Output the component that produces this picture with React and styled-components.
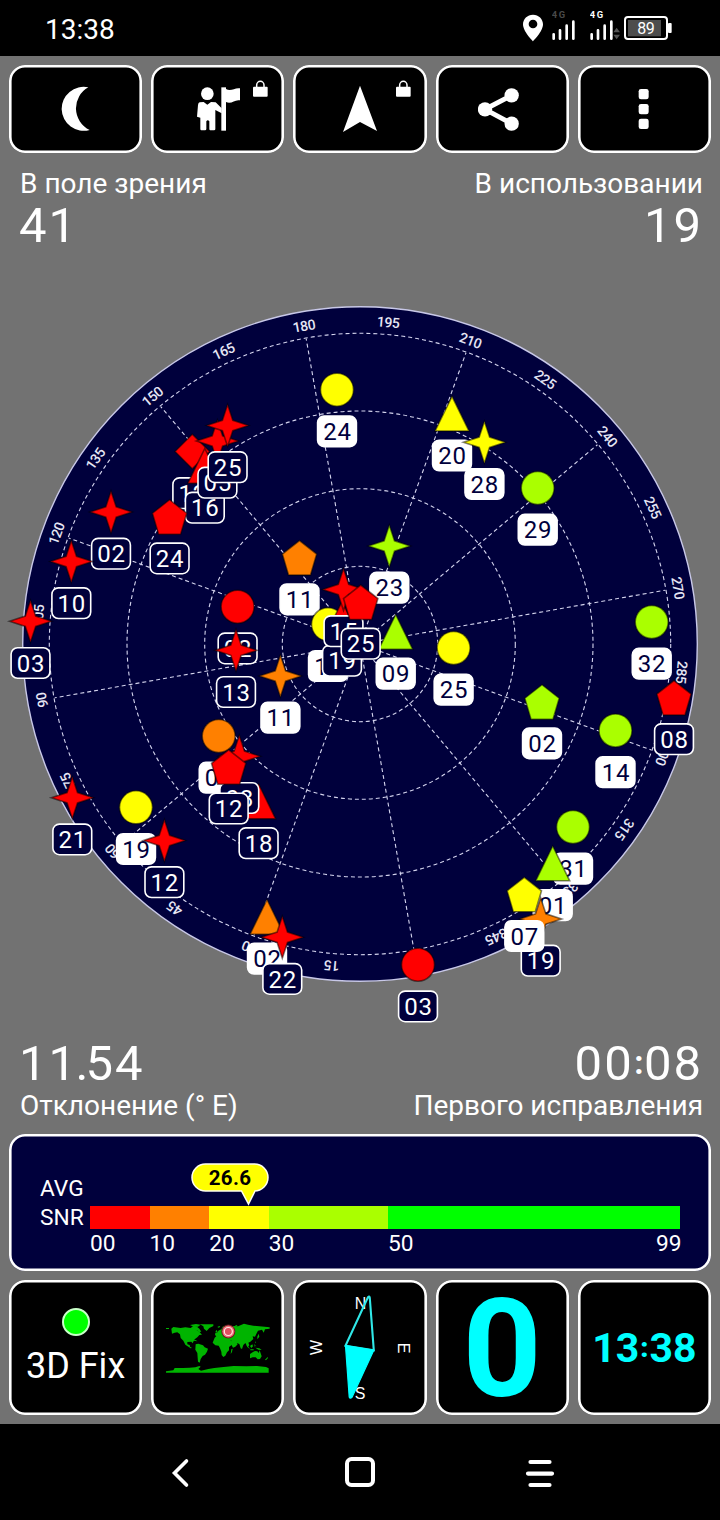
import React from 'react';
import styled, { createGlobalStyle } from 'styled-components';

const NAVY = '#00003c';
const RED = '#ff0000';
const ORANGE = '#ff8000';
const YELLOW = '#ffff00';
const LIME = '#aaff00';
const GREEN = '#00ff00';
const CYAN = '#00ffff';

const GlobalStyle = createGlobalStyle`
  * { box-sizing: border-box; }
  body { margin: 0; background: #000; }
`;

const Screen = styled.div`
  width: 720px;
  height: 1520px;
  display: flex;
  flex-direction: column;
  background: #727272;
  color: #fff;
  font-family: Roboto, sans-serif;
  overflow: hidden;
`;

const StatusBar = styled.header`
  height: 56px;
  padding: 0 48px 0 45px;
  display: flex;
  align-items: center;
  background: #000;
`;

const StatusTime = styled.span`
  flex: 1;
  font-size: 28px;
  line-height: 32px;
  padding-top: 3px;
`;

const StatusIcon = styled.svg`
  display: block;
  height: 56px;
  width: ${(p) => p.$w}px;
  margin-left: ${(p) => p.$gap || 0}px;
`;

const TileRow = styled.div`
  display: grid;
  grid-template-columns: repeat(5, 1fr);
  gap: 9px;
  padding: 9px 9px 0;
`;

const Tile = styled.div`
  position: relative;
  height: ${(p) => p.$h}px;
  border-radius: 16px;
  background: #000;
  box-shadow: inset 0 0 0 2.6px #fff;
  display: flex;
  flex-direction: column;
  align-items: center;
  justify-content: center;
`;

const ToolIcon = styled.svg`
  display: block;
  width: 48px;
  height: 48px;
`;

const LockBadge = styled.svg`
  position: absolute;
  top: 15px;
  right: 15px;
  width: 17px;
  height: 18px;
`;

const Readouts = styled.section`
  display: flex;
  justify-content: space-between;
  padding: ${(p) => (p.$top ? '12.5px 17px 0 20px' : '0.5px 17px 0 20px')};
  height: ${(p) => (p.$top ? 97 : 86)}px;
`;

const Readout = styled.div`
  display: flex;
  flex-direction: column;
  align-items: ${(p) => (p.$end ? 'flex-end' : 'flex-start')};
`;

const Caption = styled.div`
  font-size: 28px;
  line-height: 36px;
  white-space: nowrap;
`;

const Value = styled.div`
  font-size: 49px;
  line-height: 48px;
  letter-spacing: 2px;
  margin-left: -1px;
  white-space: nowrap;
`;

const Point = styled.span`
  margin-left: -2.5px;
  letter-spacing: -3px;
`;

const Colon = styled.span`
  font-size: 0.67em;
  font-weight: ${(p) => (p.$heavy ? 900 : 700)};
  line-height: 0;
  vertical-align: 0.17em;
  letter-spacing: 0;
  padding: 0 ${(p) => (p.$heavy ? 1 : 0.5)}px;
`;

const Radar = styled.svg`
  display: block;
  width: 720px;
  height: 789px;
`;

const SnrPanel = styled.section`
  margin: 9px 9px 0;
  height: 137px;
  border-radius: 16px;
  background: ${NAVY};
  box-shadow: inset 0 0 0 2.6px #fff;
  padding: 40px 31px 0;
  display: flex;
`;

const SnrTitle = styled.div`
  width: 50px;
  font-size: 22.7px;
  line-height: 29px;
`;

const SnrScale = styled.div`
  position: relative;
  flex: 1;
  padding-top: 31.5px;
`;

const SnrBar = styled.div`
  display: flex;
  height: 23.5px;
`;

const Segment = styled.div`
  flex: ${(p) => p.$span};
  background: ${(p) => p.$color};
`;

const Ticks = styled.div`
  display: flex;
  margin-right: -1.5px;
`;

const Tick = styled.div`
  width: ${(p) => p.$w}px;
  flex-grow: ${(p) => (p.$last ? 1 : 0)};
  text-align: ${(p) => (p.$last ? 'right' : 'left')};
  font-size: 22.7px;
  line-height: 30px;
`;

const SnrBubble = styled.div`
  position: absolute;
  left: 101px;
  top: -11.5px;
  width: 78px;
  height: 43px;
`;

const BubbleShape = styled.svg`
  display: block;
  width: 78px;
  height: 43px;
`;

const FixLamp = styled.div`
  width: 28px;
  height: 28px;
  border-radius: 50%;
  border: 2px solid #c8ffc8;
  background: ${GREEN};
  margin-top: -0.5px;
`;

const FixText = styled.div`
  font-size: 36px;
  line-height: 42px;
  margin-top: 9.5px;
  white-space: nowrap;
`;

const MapDrawing = styled.svg`
  display: block;
  width: 103px;
  height: 49px;
  overflow: visible;
  margin-top: 1px;
`;

const CompassDrawing = styled.svg`
  display: block;
  width: 133px;
  height: 135px;
`;

const SpeedText = styled.div`
  font-size: 138px;
  line-height: 135px;
  padding-top: 3px;
  font-weight: 700;
  color: ${CYAN};
`;

const ClockText = styled.div`
  font-size: 41px;
  line-height: 48px;
  font-weight: 700;
  color: ${CYAN};
  white-space: nowrap;
`;

const NavBar = styled.nav`
  margin-top: auto;
  height: 96px;
  background: #000;
  display: flex;
  justify-content: center;
  align-items: center;
  gap: 140px;
`;

const NavIcon = styled.svg`
  display: block;
  width: 40px;
  height: 40px;
`;

const SHAPES = {
  circle: <circle r="16.5" />,
  star: <path d="M0 -21 L5.2 -5.2 L21 0 L5.2 5.2 L0 21 L-5.2 5.2 L-21 0 L-5.2 -5.2Z" />,
  tri: <path d="M0 -17.5 L17 17.3 L-17 17.3Z" />,
  penta: <path d="M0 -17 L17.2 -3.5 L11 17.5 L-11 17.5 L-17.2 -3.5Z" />,
  diamond: <path d="M0 -17.3 L17.3 0 L0 17.3 L-17.3 0Z" />,
};

/* shape, x, y, colour, number, used in fix */
const SATELLITES = [
  ['circle', 337, 389.7, YELLOW, '24', true],
  ['diamond', 192.3, 451.5, RED, '12', false],
  ['tri', 204.8, 466, RED, '16', false],
  ['star', 217.4, 441, RED, '05', false],
  ['star', 227.6, 425.5, RED, '25', false],
  ['penta', 169.6, 516.7, RED, '24', false],
  ['star', 111, 512, RED, '02', false],
  ['star', 71.3, 561.5, RED, '10', false],
  ['star', 30.5, 621.3, RED, '03', false],
  ['tri', 452, 413.8, YELLOW, '20', true],
  ['star', 484.4, 442.3, YELLOW, '28', true],
  ['circle', 537.7, 488, LIME, '29', true],
  ['star', 389.3, 546, LIME, '23', true],
  ['penta', 299.5, 557.6, ORANGE, '11', true],
  ['circle', 237.6, 606.7, RED, '02', false],
  ['star', 236, 650.3, RED, '13', false],
  ['star', 280.4, 676, ORANGE, '11', true],
  ['circle', 328, 624.3, YELLOW, '12', true],
  ['tri', 342, 619, RED, '19', false],
  ['star', 343.5, 589.5, RED, '15', false],
  ['tri', 395.7, 632, LIME, '09', true],
  ['penta', 360.7, 602, RED, '25', false],
  ['circle', 453.6, 648, YELLOW, '25', true],
  ['penta', 542, 701.7, LIME, '02', true],
  ['circle', 615.5, 730.5, LIME, '14', true],
  ['circle', 651.7, 622, LIME, '32', true],
  ['penta', 674, 697.5, RED, '08', false],
  ['circle', 218.7, 736, ORANGE, '05', true],
  ['tri', 258.6, 801.5, RED, '18', false],
  ['star', 239.3, 756.3, RED, '08', false],
  ['penta', 228.7, 766.8, RED, '12', false],
  ['star', 72.3, 797.7, RED, '21', false],
  ['circle', 136, 807.3, YELLOW, '19', true],
  ['star', 164.4, 840.5, RED, '12', false],
  ['circle', 573, 827, LIME, '31', true],
  ['tri', 552.7, 863.5, LIME, '01', true],
  ['star', 540.7, 919, ORANGE, '19', false],
  ['penta', 524.3, 894.3, YELLOW, '07', true],
  ['tri', 267, 917, ORANGE, '02', true],
  ['star', 282.3, 937.2, RED, '22', false],
  ['circle', 418, 964.7, RED, '03', false],
];

const CX = 360;
const CY = 644;
const AZIMUTH_SHIFT = 190;

function polar(azimuth, r) {
  const a = ((azimuth - AZIMUTH_SHIFT) * Math.PI) / 180;
  return [CX + r * Math.sin(a), CY - r * Math.cos(a)];
}

function Satellite({ sat }) {
  const [shape, x, y, color, id, used] = sat;
  return (
    <g transform={`translate(${x} ${y})`}>
      <g fill={color} stroke="#000" strokeOpacity="0.5" strokeWidth="1.6" strokeLinejoin="miter">
        {SHAPES[shape]}
      </g>
      <rect
        x="-19.4"
        y="26.4"
        width="38.8"
        height="30.6"
        rx="6.5"
        fill={used ? '#fff' : NAVY}
        stroke="#fff"
        strokeWidth="1.6"
      />
      <text x="0.4" y="50.4" textAnchor="middle" fontSize="24" letterSpacing="0.8" fill={used ? NAVY : '#fff'}>
        {id}
      </text>
    </g>
  );
}

function SkyView() {
  const azimuths = Array.from({ length: 24 }, (_, i) => i * 15);
  return (
    <Radar viewBox="0 250 720 789" fontFamily="Roboto, sans-serif">
      <circle cx={CX} cy={CY} r="337.3" fill={NAVY} stroke="#c8c8e8" strokeWidth="1.4" />
      <g fill="none" stroke="#d4d4ee" strokeWidth="1.1" strokeDasharray="4 3">
        {[77.7, 155.3, 233, 310.7].map((r) => (
          <circle key={r} cx={CX} cy={CY} r={r} />
        ))}
        {azimuths.filter((a) => a % 30 === 0).map((a) => {
          const [x, y] = polar(a, 310);
          return <line key={a} x1={CX} y1={CY} x2={x} y2={y} />;
        })}
      </g>
      {azimuths.map((a) => {
        const [x, y] = polar(a, 323);
        return (
          <text
            key={a}
            transform={`translate(${x} ${y}) rotate(${a - AZIMUTH_SHIFT})`}
            y="5"
            textAnchor="middle"
            fontSize="14"
            fontWeight="500"
            letterSpacing="-0.5"
            fill="#e6e6f4"
          >
            {a}
          </text>
        );
      })}
      {SATELLITES.map((sat, i) => (
        <Satellite key={i} sat={sat} />
      ))}
    </Radar>
  );
}

function Lock() {
  return (
    <LockBadge viewBox="0 0 51 54" fill="none">
      <path d="M14 24V15a11 11 0 0 1 22 0v9" stroke="#fff" strokeWidth="4.5" />
      <rect x="3" y="20" width="44" height="30" rx="3" fill="#fff" />
    </LockBadge>
  );
}

function Signal({ color, w, gap, arrows }) {
  return (
    <StatusIcon $w={w} $gap={gap} viewBox={`0 0 ${w * 3} 168`}>
      <text x="-1" y="53" fontSize="28" fontWeight="700" textLength="40" fill={color} fontFamily="Roboto, sans-serif">4G</text>
      <g stroke="#fff" strokeWidth="8" strokeLinecap="round">
        <path d="M5 103V116M24 91V116M44 77V116M64 65V116" />
      </g>
      {arrows && <path d="M70 97l10-14 10 14zM70 104h20l-10 14z" fill="#555" />}
    </StatusIcon>
  );
}

function Status() {
  return (
    <StatusBar>
      <StatusTime>13:38</StatusTime>
      <StatusIcon $w={20} viewBox="0 0 60 168">
        <path
          fillRule="evenodd"
          fill="#fff"
          d="M30 44C13 44 0 57 0 73c0 22 30 51 30 51s30-29 30-51C60 57 47 44 30 44zm0 15a13 13 0 1 1 0 26 13 13 0 0 1 0-26z"
        />
      </StatusIcon>
      <Signal color="#4a4a4a" w={24} gap={9} />
      <Signal color="#fff" w={31} gap={14} arrows />
      <StatusIcon $w={48} $gap={3} viewBox="0 0 144 168">
        <rect x="3" y="51" width="126" height="66" rx="9" fill="none" stroke="#fff" strokeWidth="6" />
        <rect x="12" y="60" width="99" height="49" fill="#4d4d4d" />
        <rect x="132" y="69" width="11" height="30" rx="3" fill="#fff" />
        <text x="65" y="102" textAnchor="middle" fontSize="48" fill="#fff" fontFamily="Roboto, sans-serif" letterSpacing="-2">89</text>
      </StatusIcon>
    </StatusBar>
  );
}

function Toolbar() {
  return (
    <TileRow>
      <Tile $h={88}>
        <ToolIcon viewBox="155 255 144 144">
          <path fill="#fff" d="M264 262A66 66 0 1 0 268 390A72 72 0 0 1 264 262Z" />
        </ToolIcon>
      </Tile>
      <Tile $h={88}>
        <ToolIcon viewBox="581 255 144 144" fill="#fff">
          <circle cx="621" cy="281" r="19" />
          <path d="M598 307L610 306L621 314L632 306L646 307L664 325V340L645 330V388Q645 391 641 391H630Q627 391 627 387V364Q622 358 618 364V387Q618 391 614 391H603Q600 391 600 387V353L590 350L593 315Q594 308 598 307Z" />
          <rect x="663" y="262" width="14" height="130" />
          <path d="M677 267C692 276 703 262 719 265V301C703 297 694 314 677 306Z" />
        </ToolIcon>
        <Lock />
      </Tile>
      <Tile $h={88}>
        <ToolIcon viewBox="1008 255 144 144">
          <path fill="#fff" d="M1080 257L1131 393L1080 366L1029 396Z" />
        </ToolIcon>
        <Lock />
      </Tile>
      <Tile $h={88}>
        <ToolIcon viewBox="354 255 144 144" fill="#fff">
          <path d="M455 286L375 328L455 371" fill="none" stroke="#fff" strokeWidth="15" />
          <circle cx="375" cy="328" r="21.5" />
          <circle cx="455" cy="286" r="21.5" />
          <circle cx="455" cy="371" r="21.5" />
        </ToolIcon>
      </Tile>
      <Tile $h={88}>
        <ToolIcon viewBox="781 255 144 144" fill="#fff">
          <rect x="837" y="267" width="30" height="31" rx="7" />
          <rect x="837" y="312" width="30" height="31" rx="7" />
          <rect x="837" y="356" width="30" height="31" rx="7" />
        </ToolIcon>
      </Tile>
    </TileRow>
  );
}

const SEGMENTS = [
  [10, RED],
  [10, ORANGE],
  [10, YELLOW],
  [20, LIME],
  [49, GREEN],
];

function Snr() {
  return (
    <SnrPanel>
      <SnrTitle>
        AVG
        <br />
        SNR
      </SnrTitle>
      <SnrScale>
        <SnrBar>
          {SEGMENTS.map(([span, color]) => (
            <Segment key={color} $span={span} $color={color} />
          ))}
        </SnrBar>
        <Ticks>
          <Tick $w={59.6}>00</Tick>
          <Tick $w={59.6}>10</Tick>
          <Tick $w={59.6}>20</Tick>
          <Tick $w={119.2}>30</Tick>
          <Tick $w={40}>50</Tick>
          <Tick $w={40} $last>99</Tick>
        </Ticks>
        <SnrBubble>
          <BubbleShape viewBox="0 0 78 43">
            <path
              d="M14.5 1H63.5A13.5 13.5 0 0 1 63.5 28H64L57.5 41L50.5 28H14.5A13.5 13.5 0 0 1 14.5 1Z"
              fill={YELLOW}
              stroke="#fffff0"
              strokeWidth="1.5"
            />
            <text x="39" y="21.8" textAnchor="middle" fontSize="20.5" fontWeight="700" letterSpacing="0.3" fill="#000" fontFamily="Roboto, sans-serif">
              26.6
            </text>
          </BubbleShape>
        </SnrBubble>
      </SnrScale>
    </SnrPanel>
  );
}

function WorldMap() {
  return (
    <MapDrawing viewBox="48 162 309 147">
      <g fill="#00b400">
        <path d="M48 174h9v3h-9zM64 176l6-5 22 3 14-2 16 2 8-6 12 3 6 6-8 4 8 4 8 9-8 1-6 7-8 6-4 7-2 5-4-5-12 1 0 7 7 2 1 5 6 4-4 1-16-11-6-12-8-8-2-11-8-6-8 1-8 3z" />
        <path d="M120 165l18-3 14 2-8 6-12 1zM138 174l10 2 6 9-7 1-7-6zM150 163l40 0 0 5-12 6-8 9-8-7-2-7z" />
        <path d="M126 208l12 3 4 3-10-2zM137 223l8-2 14 5 5 6 10 4-3 9-6 9-7 4-6 9-3 11-5-3-1-12-1-14-6-10z" />
        <path d="M194 203l8-7 12 1 8 5 14-1 7 12 7 3-5 9-8 6 0 10-6 6-5 10-6 4-5-6-1-10-4-10-4-8-10-1-8-8z" />
        <path d="M244 238l4-2-2 10-4 6zM195 195l1-7 7-1 2-5 9-4 4-8 12-5 8 1-4 7 15-5 15 1 18-8 12 3 16 3 18 2 16 1 15 2v4l-14 2-4 10-5-9-12 3-4 8-5 10-7-1 2 8-9 8-6 3 3 8-5 5-4-7-3-5-6 6-4 12-4-2-4-13-8-3 3 4-7 7-7 3-8-15 4-6-12-1-5-3-7 1-6-4-6 3z" />
        <path d="M196 186l4-7 3 8zM202 171l6-3 3 2-5 3zM288 222l8 9 4 6-8-6zM300 228l7-5 2 6-5 5zM301 238h10v3h-10zM316 233l12 2 7 5-10-1zM313 222l4 5-3 3zM315 213l3 5-2 2zM322 200l4-9 2 9-6 8z" />
        <path d="M300 252l9-6 6-3 7 1 4 5 3-8 3 9 3 9-5 8-7 1-6-6-9 0-8 3zM345 269l8-8 1 3-6 7zM252 171l6-6 5 0-9 7z" />
        <path d="M48 304l22-3 4-7 25 0 20-1 17-1 12-4 4 2-7 7 8 5 22-5 18-3 28-3 30-3 38 1 32-1 27 3 8 4v13H48z" />
      </g>
      <circle cx="235" cy="184.5" r="21" fill="#6b1820" />
      <circle cx="235" cy="184.5" r="18" fill="#f07078" />
      <circle cx="235" cy="184.5" r="12" fill="#e05060" stroke="#ffe8e8" strokeWidth="3.5" />
    </MapDrawing>
  );
}

function Compass() {
  return (
    <CompassDrawing viewBox="293.5 1280 133 135">
      <g fill="#fff" fontFamily="Liberation Sans, sans-serif" fontSize="16" textAnchor="middle">
        <text x="361" y="1309">N</text>
        <text x="360.5" y="1399">S</text>
        <text transform="translate(322 1347.5) rotate(-90)">W</text>
        <text transform="translate(398.8 1348) rotate(90)">E</text>
      </g>
      <path d="M346 1345.7L368.3 1297.5Q370 1295.5 370.3 1298L374.3 1350.3Z" fill="none" stroke="#30e8e8" strokeWidth="2.1" />
      <path d="M346 1345.7L374.3 1350.3L352.7 1397Q350.5 1399.5 349.7 1397Z" fill={CYAN} stroke={CYAN} strokeWidth="1.2" />
    </CompassDrawing>
  );
}

export default function App() {
  return (
    <Screen>
      <GlobalStyle />
      <Status />
      <Toolbar />
      <Readouts $top>
        <Readout>
          <Caption>В поле зрения</Caption>
          <Value>41</Value>
        </Readout>
        <Readout $end>
          <Caption>В использовании</Caption>
          <Value>19</Value>
        </Readout>
      </Readouts>
      <SkyView />
      <Readouts>
        <Readout>
          <Value>11<Point>.</Point>54</Value>
          <Caption>Отклонение (° E)</Caption>
        </Readout>
        <Readout $end>
          <Value>00<Colon>:</Colon>08</Value>
          <Caption>Первого исправления</Caption>
        </Readout>
      </Readouts>
      <Snr />
      <TileRow>
        <Tile $h={135}>
          <FixLamp />
          <FixText>3D Fix</FixText>
        </Tile>
        <Tile $h={135}>
          <WorldMap />
        </Tile>
        <Tile $h={135}>
          <Compass />
        </Tile>
        <Tile $h={135}>
          <SpeedText>0</SpeedText>
        </Tile>
        <Tile $h={135}>
          <ClockText>13<Colon $heavy>:</Colon>38</ClockText>
        </Tile>
      </TileRow>
      <NavBar>
        <NavIcon viewBox="160 1452 40 40" fill="none" stroke="#fff" strokeWidth="3.6" strokeLinecap="round">
          <path d="M186.500 1461L174.500 1473L186.500 1485" />
        </NavIcon>
        <NavIcon viewBox="340 1452 40 40" fill="none" stroke="#fff" strokeWidth="4">
          <rect x="347" y="1459" width="26" height="26" rx="4.5" />
        </NavIcon>
        <NavIcon viewBox="520 1452 40 40" fill="none" stroke="#fff" strokeWidth="4.2" strokeLinecap="round">
          <path d="M530.500 1462H549.500M528 1473.600H552M530.500 1485H549.500" />
        </NavIcon>
      </NavBar>
    </Screen>
  );
}
